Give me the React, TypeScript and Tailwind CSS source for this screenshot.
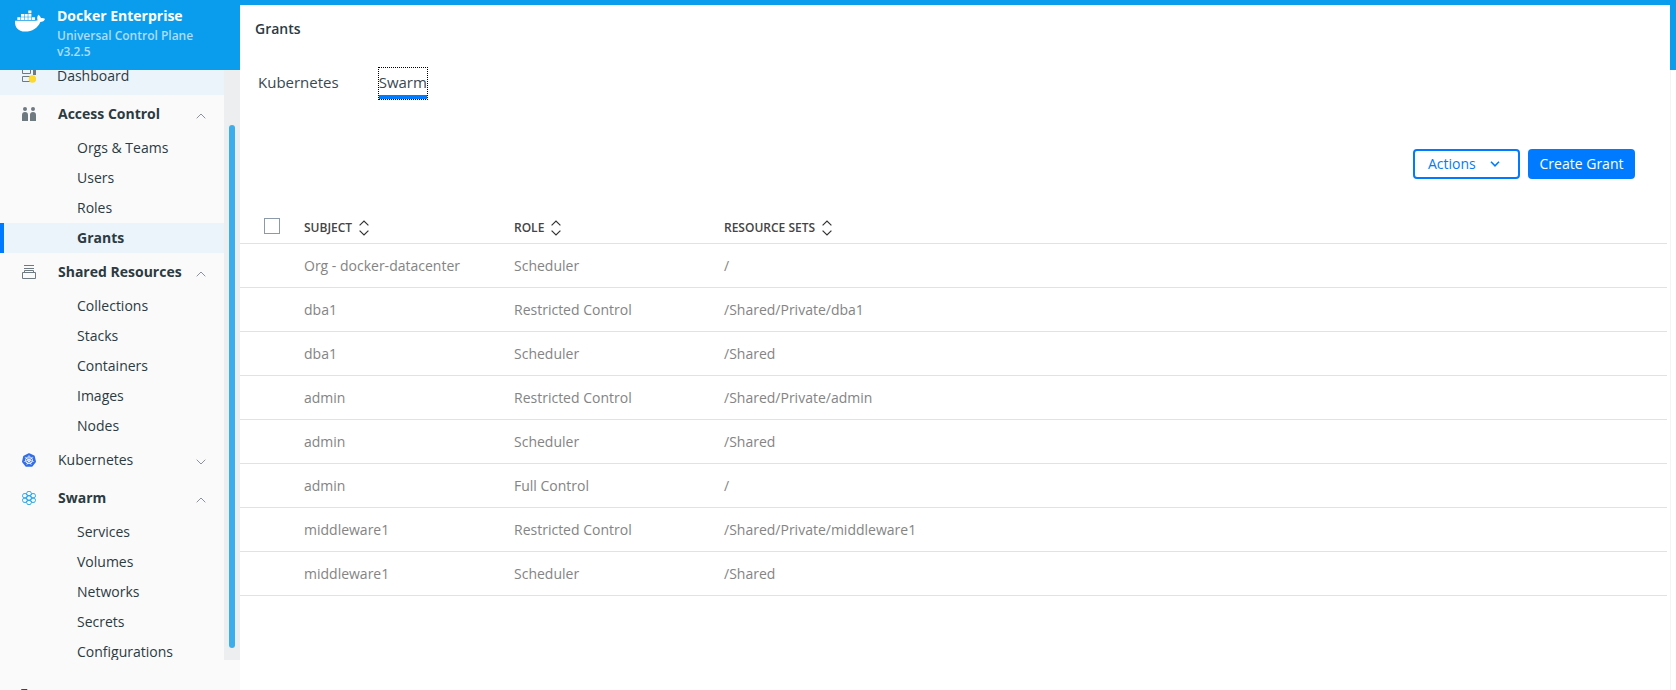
import React, { useState } from "react";
import { FaDocker } from "react-icons/fa";
import { SiKubernetes } from "react-icons/si";

type Section = {
  label: string;
  icon: React.ReactNode;
  open?: boolean;
  items?: string[];
};

function DashboardIcon() {
  return (
    <svg width="14" height="14" viewBox="0 0 14 14" fill="none" stroke="#6f7980">
      <path d="M.5 .5h8v4h-8zM.5 7.500h7v5h-7z" />
      <path d="M12.5 0v6" strokeWidth="3" />
      <circle cx="10.5" cy="10" r="3.700" fill="#fbd92e" stroke="none" />
    </svg>
  );
}

function PeopleIcon() {
  return (
    <svg width="14" height="14" viewBox="0 0 14 14" fill="#6f7980">
      <circle cx="3" cy="2" r="2" />
      <circle cx="11" cy="2" r="2" />
      <path d="M0 14V8a3 3 0 0 1 6 0v6zM8 14V8a3 3 0 0 1 6 0v6z" />
    </svg>
  );
}

function StackIcon() {
  return (
    <svg width="14" height="14" viewBox="0 0 14 14" fill="none" stroke="#6f7980">
      <path d="M2 .5h10M2 3.500h10M2.500 7.500V5.500h9V7.500M.5 7.500h13v6H.5z" />
    </svg>
  );
}

const hexCenters = [
  [7, 7],
  [7, 2.5],
  [7, 11.5],
  [2.8, 4.75],
  [11.2, 4.75],
  [2.8, 9.25],
  [11.2, 9.25],
];

function SwarmIcon() {
  return (
    <svg width="14" height="14" viewBox="0 0 14 14" fill="none" stroke="#1ba1ee" strokeWidth=".95" strokeLinejoin="round">
      {hexCenters.map(([x, y]) => (
        <path key={`${x},${y}`} d={`M${x - 1.3} ${y - 2.1}h2.6l1.2 2.1l-1.2 2.1h-2.6l-1.2 -2.1z`} />
      ))}
    </svg>
  );
}

function Caret({ up }: { up?: boolean }) {
  return (
    <svg className="mt-1" width="10" height="6" viewBox="0 0 10 6" fill="none" stroke="#8b9299">
      <path d={up ? "M.7 5.300L5 1l4.300 4.300" : "M.7 .7L5 5L9.300 .7"} />
    </svg>
  );
}

function SortIcon() {
  return (
    <svg width="10" height="16" viewBox="0 0 10 16" fill="none" stroke="#333" strokeWidth="1.200">
      <path d="M.6 5.400L5 1l4.400 4.400M.6 10.600L5 15l4.400-4.400" />
    </svg>
  );
}

const sections: Section[] = [
  { label: "Access Control", icon: <PeopleIcon />, open: true, items: ["Orgs & Teams", "Users", "Roles", "Grants"] },
  { label: "Shared Resources", icon: <StackIcon />, open: true, items: ["Collections", "Stacks", "Containers", "Images", "Nodes"] },
  { label: "Kubernetes", icon: <SiKubernetes size={14} color="#326de6" /> },
  { label: "Swarm", icon: <SwarmIcon />, open: true, items: ["Services", "Volumes", "Networks", "Secrets", "Configurations"] },
];

const grants = [
  ["Org - docker-datacenter", "Scheduler", "/"],
  ["dba1", "Restricted Control", "/Shared/Private/dba1"],
  ["dba1", "Scheduler", "/Shared"],
  ["admin", "Restricted Control", "/Shared/Private/admin"],
  ["admin", "Scheduler", "/Shared"],
  ["admin", "Full Control", "/"],
  ["middleware1", "Restricted Control", "/Shared/Private/middleware1"],
  ["middleware1", "Scheduler", "/Shared"],
];

function Sidebar() {
  return (
    <aside className="flex w-60 shrink-0 flex-col">
      <div className="flex h-[70px] shrink-0 gap-3 bg-[#0b9ded] pl-[15px] text-white">
        <FaDocker className="mt-[9px] h-6 w-[30px]" />
        <div className="pt-1.5">
          <div className="text-sm font-bold leading-5">Docker Enterprise</div>
          <div className="mt-0.5 text-xs font-semibold leading-4 text-[#aedcfa]">
            Universal Control Plane
            <br />
            v3.2.5
          </div>
        </div>
      </div>
      <div className="flex min-h-0 flex-1">
        <nav className="min-w-0 flex-1 overflow-hidden">
          <ul className="-mt-[13px]">
            <li>
              <a href="#dashboard" className="flex h-[38px] items-center bg-[#ebf3fb] pl-[22px]">
                <DashboardIcon />
                <span className="ml-[21px]">Dashboard</span>
              </a>
            </li>
            {sections.map((s) => (
              <li key={s.label}>
                <button type="button" aria-expanded={!!s.open} className="flex h-[38px] w-full items-center pl-[22px] pr-[18px]">
                  {s.icon}
                  <span className={s.open ? "ml-[22px] flex-1 text-left font-bold" : "ml-[22px] flex-1 text-left"}>{s.label}</span>
                  <Caret up={s.open} />
                </button>
                {s.items && (
                  <ul>
                    {s.items.map((item) => (
                      <li key={item}>
                        <a
                          href="#section"
                          className={
                            item === "Grants"
                              ? "flex h-[30px] items-center border-l-4 border-[#007bff] bg-[#ebf3fb] pl-[73px] font-bold"
                              : "flex h-[30px] items-center pl-[77px]"
                          }
                        >
                          {item}
                        </a>
                      </li>
                    ))}
                  </ul>
                )}
              </li>
            ))}
          </ul>
        </nav>
        <div className="flex w-4 flex-col bg-[#edeef0] pb-3 pl-[5px] pt-[55px]">
          <div className="w-1.5 flex-1 rounded-full bg-[#3daeec]" />
        </div>
      </div>
      <div className="h-[30px] shrink-0 overflow-hidden pl-[21px] pt-[29px]">
        <svg width="14" height="14" viewBox="0 0 14 14" fill="none" stroke="#3a454c">
          <path d="M.5 13.500V.5H6l1.500 2h6v11z" />
        </svg>
      </div>
    </aside>
  );
}

export default function App() {
  const [tab, setTab] = useState("Swarm");
  return (
    <div className="flex h-screen overflow-hidden bg-[#fafafa] font-['Open_Sans',sans-serif] text-sm text-[#2c3a42]">
      <Sidebar />
      <div className="flex min-w-0 flex-1">
        <div className="flex min-w-0 flex-1 flex-col border-t-[5px] border-[#0b9ded]">
          <main className="flex-1 bg-white">
            <h1 className="px-[15px] pt-3.5 font-semibold leading-5">Grants</h1>
            <div role="tablist" className="mt-[29px] flex gap-10 pl-[18px] text-[15px] text-[#3a4850]">
              {["Kubernetes", "Swarm"].map((t) => (
                <button
                  key={t}
                  type="button"
                  role="tab"
                  aria-selected={tab === t}
                  onClick={() => setTab(t)}
                  className={
                    tab === t
                      ? "h-[31px] border-b-4 border-[#007bff] pt-0.5 outline-1 outline-dotted outline-black"
                      : "h-[31px] border-b-4 border-transparent pt-0.5"
                  }
                >
                  {t}
                </button>
              ))}
            </div>
            <div className="mt-[50px] flex justify-end gap-2 pr-[35px]">
              <button type="button" className="flex h-[30px] w-[107px] items-center justify-between rounded border-2 border-[#007bff] pl-[13px] pr-[18px] text-[#007bff]">
                Actions
                <svg width="10" height="6" viewBox="0 0 10 6" fill="none" stroke="currentColor" strokeWidth="1.600">
                  <path d="M1 .8L5 4.800L9 .8" />
                </svg>
              </button>
              <button type="button" className="h-[30px] w-[107px] rounded bg-[#007bff] text-white">
                Create Grant
              </button>
            </div>
            <div className="mt-7 pr-[3px]">
              <table className="w-full table-fixed border-collapse text-left">
                <colgroup>
                  <col className="w-16" />
                  <col className="w-[210px]" />
                  <col className="w-[210px]" />
                  <col />
                </colgroup>
                <thead>
                  <tr className="h-9 border-b border-[#e2e2e2] align-bottom text-xs text-[#444]">
                    <th className="pb-[9px] pl-6">
                      <input type="checkbox" aria-label="Select all grants" className="block size-4 appearance-none border border-[#8c99a8] bg-white" />
                    </th>
                    {["SUBJECT", "ROLE", "RESOURCE SETS"].map((h) => (
                      <th key={h} className="pb-[7px] font-semibold">
                        <button type="button" className="flex items-center gap-[7px]">
                          {h}
                          <SortIcon />
                        </button>
                      </th>
                    ))}
                  </tr>
                </thead>
                <tbody className="text-[#848484]">
                  {grants.map((row, i) => (
                    <tr key={i} className="h-11 border-b border-[#e2e2e2]">
                      <td />
                      {row.map((cell, j) => (
                        <td key={j} className="pt-0.5">{cell}</td>
                      ))}
                    </tr>
                  ))}
                </tbody>
              </table>
            </div>
          </main>
        </div>
        <div className="w-1.5 shrink-0 border-l border-[#f4f4f4] bg-white">
          <div className="-ml-px h-[70px] bg-[#0b9ded]" />
        </div>
      </div>
    </div>
  );
}
